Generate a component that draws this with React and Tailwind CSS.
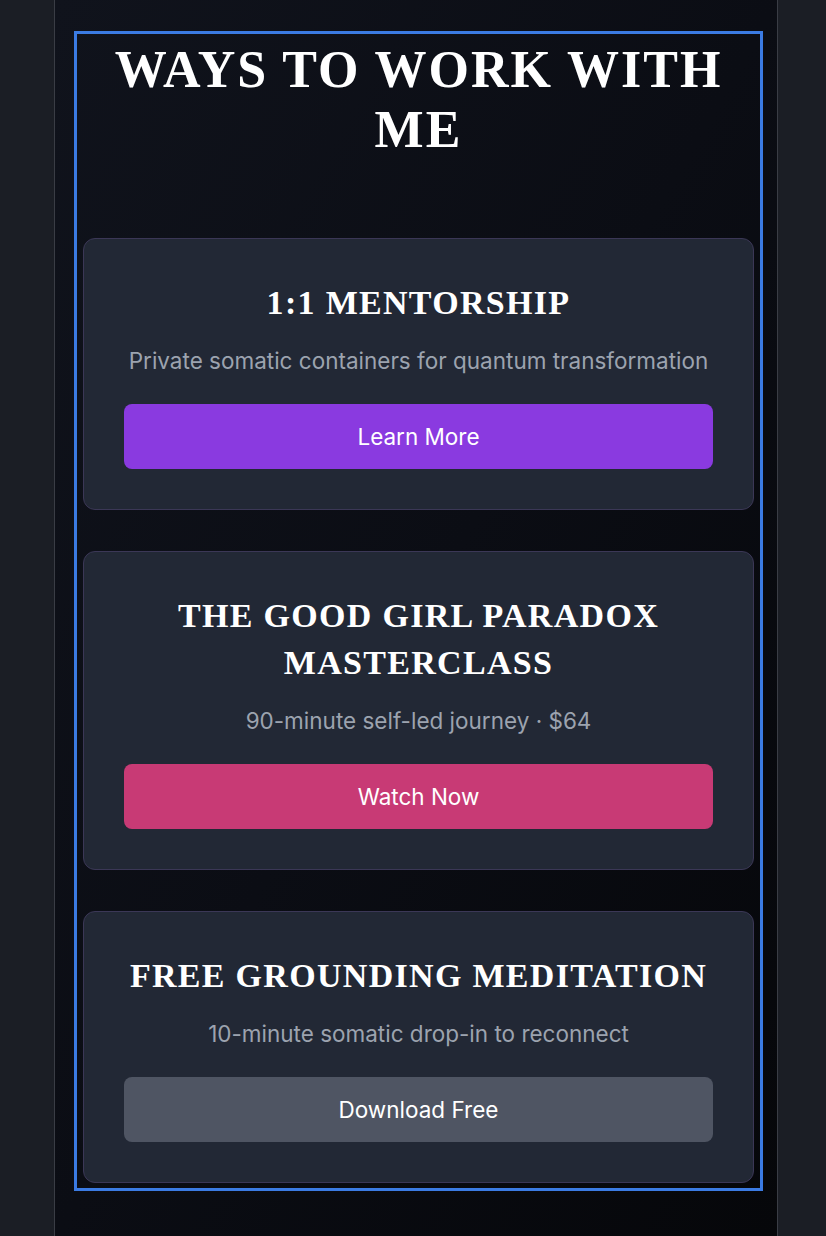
import React from 'react';

const offerings = [
  {
    title: '1:1 MENTORSHIP',
    subtitle: 'Private somatic containers for quantum transformation',
    cta: 'Learn More',
    btn: 'bg-[#8a3ae0]',
  },
  {
    title: 'THE GOOD GIRL PARADOX MASTERCLASS',
    subtitle: '90-minute self-led journey · $64',
    cta: 'Watch Now',
    btn: 'bg-[#c83a75]',
  },
  {
    title: 'FREE GROUNDING MEDITATION',
    subtitle: '10-minute somatic drop-in to reconnect',
    cta: 'Download Free',
    btn: 'bg-[#4f5563]',
  },
];

function OfferCard({ title, subtitle, cta, btn }) {
  return (
    <div className="rounded-xl border border-[#3b3756] bg-[#222835] p-10 text-center">
      <h3 className="mb-[18px] font-['Liberation_Serif',serif] text-[34px] font-bold leading-[47px] tracking-[1.3px] text-white">
        {title}
      </h3>
      <p className="mb-[27px] font-['Inter',sans-serif] text-[22.5px] leading-[33px] text-[#9ca3af]">
        {subtitle}
      </p>
      <button className={`h-[65px] w-full rounded-lg ${btn} font-['Inter',sans-serif] text-[22.5px] text-white`}>
        {cta}
      </button>
    </div>
  );
}

export default function App() {
  return (
    <div className="flex h-[1236px] w-[826px] overflow-hidden bg-[#1b1e25]">
      {/* left gutter */}
      <div className="w-[55px] shrink-0 border-r border-[#3a3d45] bg-[#1b1e25]" />

      {/* main column */}
      <div className="w-[722px] shrink-0 bg-gradient-to-br from-[#10131c] via-[#0b0d14] to-[#06070a] pl-[19px] pr-[14px] pt-[31px]">
        <section className="border-[3px] border-[#3b7be3] px-[6px] pb-[5px] pt-[6px]">
          <h2 className="mb-[78px] text-center font-['Liberation_Serif',serif] text-[52px] font-bold leading-[60px] tracking-[2px] text-white">
            WAYS TO WORK WITH
            <br />
            ME
          </h2>
          <div className="flex flex-col gap-[41px]">
            {offerings.map((o) => (
              <OfferCard key={o.title} {...o} />
            ))}
          </div>
        </section>
      </div>

      {/* right gutter */}
      <div className="flex-1 border-l border-[#3a3d45] bg-[#1b1e25]" />
    </div>
  );
}
